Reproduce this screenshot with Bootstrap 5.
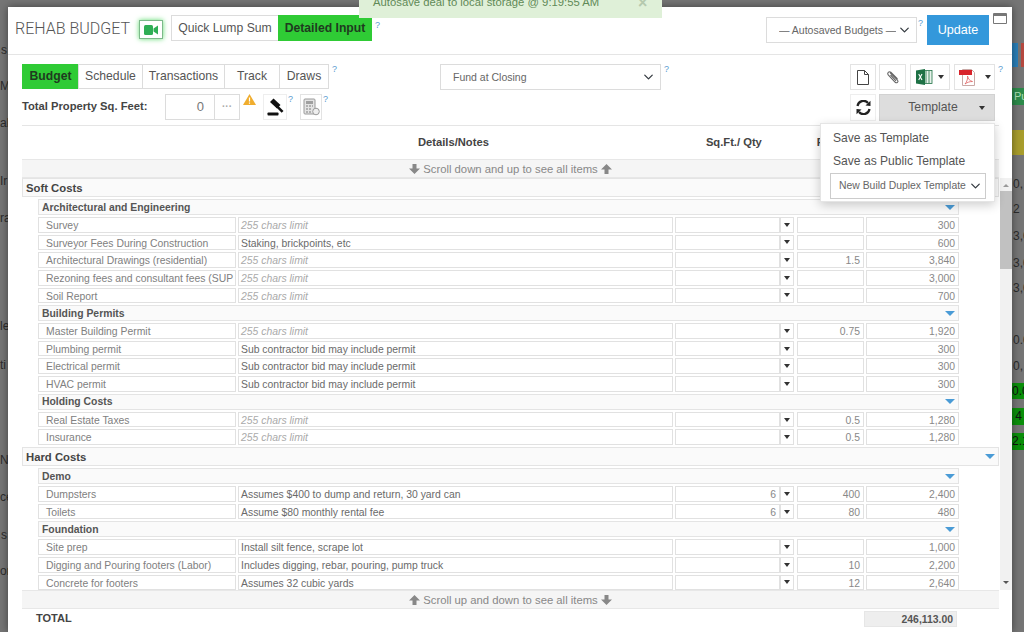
<!DOCTYPE html>
<html lang="en">
<head>
<meta charset="utf-8">
<title>Rehab Budget</title>
<link rel="stylesheet" href="https://cdn.jsdelivr.net/npm/bootstrap@5.3.0/dist/css/bootstrap.min.css">
<style>
html,body{height:632px;overflow:hidden}
body{background:#757575;font-family:"Liberation Sans",Arial,sans-serif;color:#555;font-size:12px;position:relative;width:1024px}
.bgt{position:absolute;color:#2c2c2c;font-size:12px;line-height:14px}
.bgb{position:absolute;left:1012px;width:12px;overflow:hidden}
.shell{position:absolute;left:8px;top:7px;width:1004px;height:625px;background:#fff;box-shadow:0 0 8px rgba(0,0,0,.45);display:flex;flex-direction:column;overflow:hidden}
.toast-note{position:absolute;left:359px;top:0;width:303px;height:18px;background:#dff0d8;color:#5f8a57;font-size:11.3px;line-height:5px;padding-left:14px;z-index:5}
.toast-x{position:absolute;left:279px;top:0;color:#b5c9ae;font-size:16px;font-weight:700;line-height:5px}
.head{height:48px;flex:none;border-bottom:1px solid #e5e5e5;display:flex;align-items:flex-start;padding-left:7px;position:relative}
.ttl{font-family:Roboto,"Liberation Sans",sans-serif;font-weight:300;font-size:16px;color:#555;margin-top:11px;line-height:22px;width:124px;white-space:nowrap;flex:none}
.vid{width:24px;height:19px;margin-top:13px;border:1px solid #7cb98a;box-shadow:0 0 5px #5fdc6f;display:flex;align-items:center;justify-content:center}
.seg{margin:8px 0 0 8px}
.seg .btn,.tabs .btn{border:1px solid #dcdcdc;border-radius:0;color:#555;font-size:12.2px;line-height:24px;padding:0;background:#fff;height:26px}
.seg .on,.tabs .on{background:#2fcb35;border-color:#2fcb35;color:#1f3a1f;font-weight:700}
.hlp{color:#5b9bd1;font-size:9px;line-height:10px;align-self:flex-start;width:10px;flex:none;padding-left:3px}
.sel{border:1px solid #dcdcdc;border-radius:0;font-size:10.5px;color:#666;height:26px;padding:0 20px 0 12px;background-position:right 5px center;background-size:13px 10px;line-height:24px}
.upd{width:62px;height:30px;background:#3498db;color:#fff;border:0;border-radius:0;font-size:12.6px;padding:0;margin-top:8px}
.winb{width:14px;height:11px;border:1px solid #777;border-top-width:3px;margin:6px 5px 0 4px;border-radius:1px}
.bar{display:flex;padding-left:14px;flex:none}
.tabs .btn{height:25px;line-height:23px}
.rbtn{border:1px solid #e3e3e3;background:#fff;height:26px;display:flex;align-items:center;justify-content:center;padding:0;border-radius:0}
.crt{width:0;height:0;border-left:3.5px solid transparent;border-right:3.5px solid transparent;border-top:4px solid #333;display:inline-block}
.lbl{font-size:11.2px;font-weight:700;color:#444;width:143px;line-height:25px;flex:none}
.sqf{width:75px;height:26px;border:1px solid #dcdcdc;display:flex;font-size:13px;color:#777;line-height:24px}
.sqf span{flex:1;text-align:right;padding-right:10px;border-right:1px solid #dcdcdc}
.sqf i{width:24px;text-align:center;font-style:normal;font-size:10px;font-weight:700;color:#aaa}
.tmpl{width:116px;height:27px;background:#ddd;border:1px solid #d2d2d2;border-radius:0;color:#555;font-size:12.2px;display:flex;align-items:center;padding:0 9px 0 7px;justify-content:space-between}
.rule{height:1px;background:#e5e5e5;margin:4px 13px 0 14px;flex:none}
.cols{height:33px;flex:none;position:relative;font-weight:700;font-size:11.2px;color:#444;display:flex;align-items:center;padding-bottom:1px}
.band{height:19px;flex:none;margin:0 13px 0 14px;background:#f5f5f5;border-top:1px solid #e7e7e7;border-bottom:1px solid #e7e7e7;color:#888;font-size:11.3px;text-align:center;line-height:18px}
.band svg{vertical-align:-1px}
.scrollwrap{height:412px;flex:none;display:flex;padding-left:14px}
.list{width:978px;overflow:hidden;height:412px;flex:none}
.sbar{width:12px;background:#f1f1f1;display:flex;flex-direction:column;align-items:center;flex:none}
.sthumb{width:100%;height:78px;background:#c1c1c1;margin-top:4px}
.up{border-left:3px solid transparent;border-right:3px solid transparent;border-bottom:3px solid #999;margin-top:6px;width:0;height:0}
.dn{border-left:3px solid transparent;border-right:3px solid transparent;border-top:3px solid #555;margin-top:auto;margin-bottom:6px;width:0;height:0}
.sec{height:19px;margin-bottom:2px;background:#fafafa;border:1px solid #e4e4e4;font-weight:700;font-size:11.3px;color:#444;line-height:18px;padding-left:3px;display:flex;justify-content:space-between;align-items:center;padding-right:3px;width:977px}
.sub{height:16px;margin:0 0 2px 16px;width:921px;background:#fafafa;border:1px solid #e4e4e4;font-weight:700;font-size:10.4px;color:#555;line-height:15px;padding:0 3px;display:flex;justify-content:space-between;align-items:center}
.blu{width:0;height:0;border-left:5px solid transparent;border-right:5px solid transparent;border-top:5px solid #4a9bd6;flex:none}
.ln{display:flex;height:15.65px;margin:0 0 2px 16px;font-size:10.4px;color:#666}
.ln>div{border:1px solid #e1e1e1;line-height:16px;white-space:nowrap;overflow:hidden;height:100%}
.n{width:198px;padding-left:7px;color:#808080}
.d{width:435px;margin-left:2px;padding-left:2px;color:#6a6a6a}
.d.ph{color:#aaa;font-style:italic}
.q{width:105px;margin-left:2px;text-align:right;padding-right:3px;color:#888}
.c{width:14px;display:flex;align-items:center;justify-content:center}
.r{width:67px;margin-left:3px;text-align:right;padding-right:3px;color:#888}
.t{width:93px;margin-left:2px;text-align:right;padding-right:3px;color:#888}
.tot{flex:none;height:20px;display:flex;align-items:flex-start;margin-top:2px}
.tot b{font-size:11px;color:#444;margin-left:28px;width:828px;line-height:14px}
.tot span{width:93px;height:16px;background:#eee;border:1px solid #e6e6e6;text-align:right;padding-right:3px;font-weight:700;color:#555;font-size:10.4px;line-height:15px}
.dmenu{position:absolute;left:812px;top:116px;width:175px;height:79px;background:#fff;border:1px solid #e5e5e5;box-shadow:0 3px 10px rgba(0,0,0,.2);z-index:4;padding:3px 9px}
.dmenu a{display:block;color:#555;text-decoration:none;font-size:12.1px;line-height:23px;padding-left:3px}
.dmenu .sel{height:26px;width:156px;font-size:10.4px;padding:0 16px 0 8px;margin-top:0;background-position:right 3px center;border-color:#ccc}
</style>
</head>
<body>
<span class="bgt" style="left:1px;top:43px">s</span>
<span class="bgt" style="left:0;top:79px">M</span>
<span class="bgt" style="left:0;top:116px">al</span>
<span class="bgt" style="left:0;top:174px">Ir</span>
<span class="bgt" style="left:0;top:211px">ra</span>
<span class="bgt" style="left:0;top:319px">le</span>
<span class="bgt" style="left:0;top:358px">ti</span>
<span class="bgt" style="left:0;top:453px">N</span>
<span class="bgt" style="left:0;top:490px">ce</span>
<span class="bgt" style="left:1px;top:528px">s</span>
<span class="bgt" style="left:0;top:564px">or</span>
<div class="bgb" style="top:43px;height:24px;background:linear-gradient(90deg,#2a7fb8 0 6px,#757575 6px 9px,#b5483f 9px)"></div>
<div class="bgb" style="top:88px;height:17px;background:#2c8a4a;color:#aee0b8;font-size:11px;padding-left:2px">Pu</div>
<div class="bgb" style="top:130px;height:25px;background:#a89d2c"></div>
<span class="bgt" style="left:1013px;top:177px">0,</span>
<span class="bgt" style="left:1013px;top:202px">2</span>
<span class="bgt" style="left:1013px;top:229px">3,0</span>
<span class="bgt" style="left:1013px;top:256px">3,0</span>
<span class="bgt" style="left:1013px;top:281px">3,0</span>
<span class="bgt" style="left:1013px;top:333px">0.0</span>
<span class="bgt" style="left:1013px;top:359px">0,</span>
<div class="bgb" style="top:383px;height:16px;background:#0a8f0a;color:#111;font-size:12px;line-height:16px">0.0</div>
<div class="bgb" style="top:408px;height:17px;background:#0a8f0a;color:#111;font-size:12px;line-height:16px">&nbsp;4</div>
<div class="bgb" style="top:433px;height:17px;background:#0a8f0a;color:#111;font-size:12px;line-height:16px">2.1</div>

<div class="toast-note">Autosave deal to local storage @ 9:19:55 AM<span class="toast-x">&times;</span></div>

<div class="shell">
  <div class="head">
    <div class="ttl">REHAB BUDGET</div>
    <div class="vid"><svg width="14" height="10" viewBox="0 0 14 10"><rect x="0" y="0" width="9" height="10" rx="1.5" fill="#2fae55"/><path d="M9.5 3.5 14 .5v9L9.500 6.500z" fill="#2fae55"/></svg></div>
    <div class="btn-group seg">
      <button class="btn" style="width:108px">Quick Lump Sum</button>
      <button class="btn on" style="width:94px">Detailed Input</button>
    </div>
    <span class="hlp" style="margin-top:13px">?</span>
    <select class="form-select sel ms-auto" style="width:151px;margin-top:10px"><option>— Autosaved Budgets —</option></select>
    <span class="hlp" style="margin-top:11px;padding-left:1px">?</span>
    <button class="btn upd">Update</button>
    <div class="winb"></div>
  </div>

  <div class="bar" style="margin-top:9px;height:27px">
    <div class="btn-group tabs">
      <button class="btn on" style="width:57px">Budget</button>
      <button class="btn" style="width:65px">Schedule</button>
      <button class="btn" style="width:83px">Transactions</button>
      <button class="btn" style="width:56px">Track</button>
      <button class="btn" style="width:50px">Draws</button>
    </div>
    <span class="hlp" style="margin-top:0;width:111px;padding-left:3px">?</span>
    <select class="form-select sel" style="width:221px;height:26px"><option>Fund at Closing</option></select>
    <span class="hlp">?</span>
    <div class="d-flex ms-auto" style="padding-right:7px">
      <button class="rbtn" style="width:26px"><svg width="12" height="15" viewBox="0 0 12 15"><path d="M.5.500h7l4 4v10H.5zM7.500.500v4h4" fill="#fff" stroke="#444"/></svg></button>
      <button class="rbtn" style="width:27px;margin-left:3px"><svg width="14" height="14" viewBox="0 0 14 14"><path d="M4 2.500 11.500 10c1.500 2 -.800 3.500 -2.300 2.300L2.200 5C.8 3.400 2.800 .8 4.800 2.200l6.700 6.700M4.500 5l5.500 5.800" fill="none" stroke="#666" stroke-width="1.100"/></svg></button>
      <button class="rbtn" style="width:40px;margin-left:4px;gap:5px"><svg width="17" height="16" viewBox="0 0 17 16"><rect x="7" y="1.500" width="9" height="13" fill="#e8f3ec" stroke="#1e7145" stroke-width=".8"/><path d="M10 2v12M13 2v12" stroke="#1e7145" stroke-width=".8"/><path d="M0 1.500 9 0v16L0 14.500z" fill="#1e7145"/><path d="M2.700 5 6 11M6 5l-3.300 6" stroke="#fff" stroke-width="1.100"/></svg><span class="crt"></span></button>
      <button class="rbtn" style="width:41px;margin-left:4px;gap:9px"><svg width="17" height="17" viewBox="0 0 17 17"><path d="M3.500.500h9l3 3v13h-12z" fill="#fff" stroke="#c9a9a6"/><rect x="0" y="1" width="13" height="5" fill="#d8232a"/><path d="M6 15c2-2 3-6 2.500-8 .5 3 2.500 5 5 5.500-3 0-5 .8-7.500 2.500z" fill="none" stroke="#e0605f" stroke-width=".8"/></svg><span class="crt"></span></button>
      <span class="hlp" style="width:10px">?</span>
    </div>
  </div>

  <div class="bar" style="margin-top:3px;height:27px">
    <div class="lbl">Total Property Sq. Feet:</div>
    <div class="sqf"><span>0</span><i>···</i></div>
    <svg width="13" height="11" viewBox="0 0 13 11" style="margin-left:3px;flex:none"><path d="M6.500 0 13 11H0z" fill="#f0ad2e"/><path d="M6.500 3.500v4M6.500 8.500v1.200" stroke="#fff" stroke-width="1.200"/></svg>
    <button class="rbtn" style="width:24px;margin-left:7px;border-color:#eee"><svg width="19" height="20" viewBox="0 0 19 20"><path d="M7.500 1.500 14.500 8l-3.500 3.500L4 5z" fill="#111"/><path d="m11.500 8 6 6-1.800 1.800-6-6z" fill="#111"/><rect x="1.500" y="15.500" width="11" height="3" rx=".8" fill="#111"/></svg></button>
    <span class="hlp" style="width:13px;padding-left:1px">?</span>
    <button class="rbtn" style="width:22px;border-color:#e3e3e3"><svg width="17" height="18" viewBox="0 0 17 18"><rect x="1" y="1" width="11" height="15" rx="1" fill="#e4e4e4" stroke="#9a9a9a"/><rect x="3" y="3" width="7" height="3" fill="#a0a0a0"/><path d="M3 8h2M6 8h2M9 8h1M3 11h2M6 11h2M3 14h2M6 14h2" stroke="#a0a0a0" stroke-width="1.500"/><circle cx="13" cy="13.500" r="3.300" fill="#eee" stroke="#9a9a9a"/></svg></button>
    <span class="hlp" style="width:10px;padding-left:1px">?</span>
    <div class="d-flex ms-auto" style="padding-right:17px">
      <button class="rbtn" style="width:26px;height:27px;border-color:#eee"><svg width="15" height="15" viewBox="0 0 15 15"><path d="M1.500 6a6 6 0 0 1 10.500-3" fill="none" stroke="#222" stroke-width="2.200"/><path d="M9.500 5.500 14.500 6V.8z" fill="#222"/><path d="M13.500 9a6 6 0 0 1-10.500 3" fill="none" stroke="#222" stroke-width="2.200"/><path d="M5.500 9.500.5 9v5.200z" fill="#222"/></svg></button>
      <button class="btn tmpl" style="margin-left:3px"><span class="flex-grow-1 text-center">Template</span><span class="crt"></span></button>
    </div>
  </div>

  <div class="rule"></div>
  <div class="cols"><span style="margin-left:410px">Details/Notes</span><span style="margin-left:217px">Sq.Ft./ Qty</span><span style="margin-left:55px">Rate</span></div>

  <div class="band"><svg width="11" height="10" viewBox="0 0 11 10"><path d="M3.500 0h4v4.500H11L5.500 10 0 4.500h3.500z" fill="#888"/></svg> Scroll down and up to see all items <svg width="11" height="10" viewBox="0 0 11 10"><path d="M3.500 10h4V5.500H11L5.500 0 0 5.500h3.500z" fill="#888"/></svg></div>

  <div class="scrollwrap">
    <div class="list">
      <div class="sec">Soft Costs<span class="blu"></span></div>
      <div class="sub">Architectural and Engineering<span class="blu"></span></div>
      <div class="ln"><div class="n">Survey</div><div class="d ph">255 chars limit</div><div class="q"></div><div class="c"><span class="crt"></span></div><div class="r"></div><div class="t">300</div></div>
      <div class="ln"><div class="n">Surveyor Fees During Construction</div><div class="d">Staking, brickpoints, etc</div><div class="q"></div><div class="c"><span class="crt"></span></div><div class="r"></div><div class="t">600</div></div>
      <div class="ln"><div class="n">Architectural Drawings (residential)</div><div class="d ph">255 chars limit</div><div class="q"></div><div class="c"><span class="crt"></span></div><div class="r">1.5</div><div class="t">3,840</div></div>
      <div class="ln"><div class="n">Rezoning fees and consultant fees (SUP</div><div class="d ph">255 chars limit</div><div class="q"></div><div class="c"><span class="crt"></span></div><div class="r"></div><div class="t">3,000</div></div>
      <div class="ln"><div class="n">Soil Report</div><div class="d ph">255 chars limit</div><div class="q"></div><div class="c"><span class="crt"></span></div><div class="r"></div><div class="t">700</div></div>
      <div class="sub">Building Permits<span class="blu"></span></div>
      <div class="ln"><div class="n">Master Building Permit</div><div class="d ph">255 chars limit</div><div class="q"></div><div class="c"><span class="crt"></span></div><div class="r">0.75</div><div class="t">1,920</div></div>
      <div class="ln"><div class="n">Plumbing permit</div><div class="d">Sub contractor bid may include permit</div><div class="q"></div><div class="c"><span class="crt"></span></div><div class="r"></div><div class="t">300</div></div>
      <div class="ln"><div class="n">Electrical permit</div><div class="d">Sub contractor bid may include permit</div><div class="q"></div><div class="c"><span class="crt"></span></div><div class="r"></div><div class="t">300</div></div>
      <div class="ln"><div class="n">HVAC permit</div><div class="d">Sub contractor bid may include permit</div><div class="q"></div><div class="c"><span class="crt"></span></div><div class="r"></div><div class="t">300</div></div>
      <div class="sub">Holding Costs<span class="blu"></span></div>
      <div class="ln"><div class="n">Real Estate Taxes</div><div class="d ph">255 chars limit</div><div class="q"></div><div class="c"><span class="crt"></span></div><div class="r">0.5</div><div class="t">1,280</div></div>
      <div class="ln"><div class="n">Insurance</div><div class="d ph">255 chars limit</div><div class="q"></div><div class="c"><span class="crt"></span></div><div class="r">0.5</div><div class="t">1,280</div></div>
      <div class="sec">Hard Costs<span class="blu"></span></div>
      <div class="sub">Demo<span class="blu"></span></div>
      <div class="ln"><div class="n">Dumpsters</div><div class="d">Assumes $400 to dump and return, 30 yard can</div><div class="q">6</div><div class="c"><span class="crt"></span></div><div class="r">400</div><div class="t">2,400</div></div>
      <div class="ln"><div class="n">Toilets</div><div class="d">Assume $80 monthly rental fee</div><div class="q">6</div><div class="c"><span class="crt"></span></div><div class="r">80</div><div class="t">480</div></div>
      <div class="sub">Foundation<span class="blu"></span></div>
      <div class="ln"><div class="n">Site prep</div><div class="d">Install silt fence, scrape lot</div><div class="q"></div><div class="c"><span class="crt"></span></div><div class="r"></div><div class="t">1,000</div></div>
      <div class="ln"><div class="n">Digging and Pouring footers (Labor)</div><div class="d">Includes digging, rebar, pouring, pump truck</div><div class="q"></div><div class="c"><span class="crt"></span></div><div class="r">10</div><div class="t">2,200</div></div>
      <div class="ln"><div class="n">Concrete for footers</div><div class="d">Assumes 32 cubic yards</div><div class="q"></div><div class="c"><span class="crt"></span></div><div class="r">12</div><div class="t">2,640</div></div>
    </div>
    <div class="sbar"><div class="up"></div><div class="sthumb"></div><div class="dn"></div></div>
  </div>

  <div class="band"><svg width="11" height="10" viewBox="0 0 11 10"><path d="M3.500 10h4V5.500H11L5.500 0 0 5.500h3.500z" fill="#888"/></svg> Scroll up and down to see all items <svg width="11" height="10" viewBox="0 0 11 10"><path d="M3.500 0h4v4.500H11L5.500 10 0 4.500h3.500z" fill="#888"/></svg></div>
  <div class="tot"><b>TOTAL</b><span>246,113.00</span></div>

  <div class="dmenu">
    <a href="#">Save as Template</a>
    <a href="#">Save as Public Template</a>
    <select class="form-select sel"><option>New Build Duplex Template</option></select>
  </div>
</div>
</body>
</html>
